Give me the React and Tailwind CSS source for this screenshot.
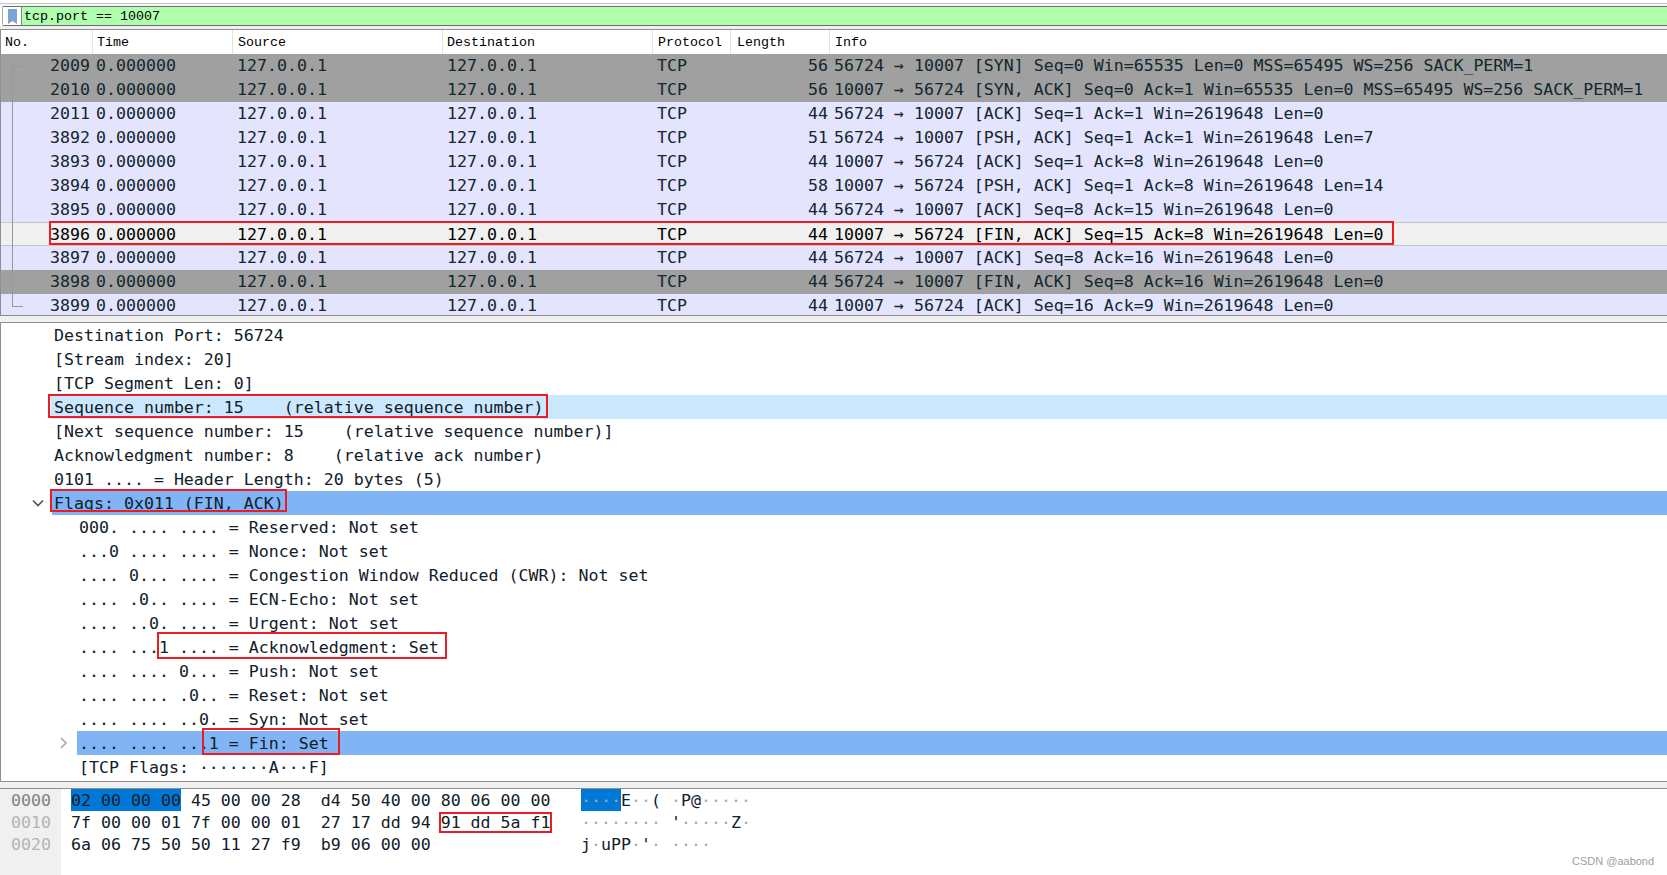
import React from "react";

const cols = "grid grid-cols-[92px_140px_210px_210px_78px_99px_1fr]";
const G = "bg-[#a0a0a0]";
const P = "bg-[#e4e4ff]";
const S = "bg-[#f0f0f0] text-black border-y border-[#c4c4c4] pt-[2px]";

const packets = [
  ["2009", "56", "56724 → 10007 [SYN] Seq=0 Win=65535 Len=0 MSS=65495 WS=256 SACK_PERM=1", G],
  ["2010", "56", "10007 → 56724 [SYN, ACK] Seq=0 Ack=1 Win=65535 Len=0 MSS=65495 WS=256 SACK_PERM=1", G],
  ["2011", "44", "56724 → 10007 [ACK] Seq=1 Ack=1 Win=2619648 Len=0", P],
  ["3892", "51", "56724 → 10007 [PSH, ACK] Seq=1 Ack=1 Win=2619648 Len=7", P],
  ["3893", "44", "10007 → 56724 [ACK] Seq=1 Ack=8 Win=2619648 Len=0", P],
  ["3894", "58", "10007 → 56724 [PSH, ACK] Seq=1 Ack=8 Win=2619648 Len=14", P],
  ["3895", "44", "56724 → 10007 [ACK] Seq=8 Ack=15 Win=2619648 Len=0", P],
  ["3896", "44", "10007 → 56724 [FIN, ACK] Seq=15 Ack=8 Win=2619648 Len=0", S],
  ["3897", "44", "56724 → 10007 [ACK] Seq=8 Ack=16 Win=2619648 Len=0", P],
  ["3898", "44", "56724 → 10007 [FIN, ACK] Seq=8 Ack=16 Win=2619648 Len=0", G],
  ["3899", "44", "10007 → 56724 [ACK] Seq=16 Ack=9 Win=2619648 Len=0", P],
];

const details = [
  [0, "Destination Port: 56724", ""],
  [0, "[Stream index: 20]", ""],
  [0, "[TCP Segment Len: 0]", ""],
  [0, "Sequence number: 15    (relative sequence number)", "seq"],
  [0, "[Next sequence number: 15    (relative sequence number)]", ""],
  [0, "Acknowledgment number: 8    (relative ack number)", ""],
  [0, "0101 .... = Header Length: 20 bytes (5)", ""],
  [0, "Flags: 0x011 (FIN, ACK)", "flags"],
  [1, "000. .... .... = Reserved: Not set", ""],
  [1, "...0 .... .... = Nonce: Not set", ""],
  [1, ".... 0... .... = Congestion Window Reduced (CWR): Not set", ""],
  [1, ".... .0.. .... = ECN-Echo: Not set", ""],
  [1, ".... ..0. .... = Urgent: Not set", ""],
  [1, ".... ...1 .... = Acknowledgment: Set", ""],
  [1, ".... .... 0... = Push: Not set", ""],
  [1, ".... .... .0.. = Reset: Not set", ""],
  [1, ".... .... ..0. = Syn: Not set", ""],
  [1, ".... .... ...1 = Fin: Set", "fin"],
  [1, "[TCP Flags: ·······A···F]", ""],
];

function Dots({ text }) {
  return (
    <>
      {text.split("").map((c, i) =>
        c === "·" ? (
          <span key={i} className="text-[#a8a8a8]">·</span>
        ) : (
          <span key={i}>{c}</span>
        )
      )}
    </>
  );
}

function HeadCell({ children, last, pad }) {
  return (
    <div className={`flex items-center pt-[2px] ${pad} ${last ? "" : "border-r border-[#e4e4e4]"}`}>
      {children}
    </div>
  );
}

function Packet({ p }) {
  return (
    <div className={`${cols} h-6 items-center overflow-hidden ${p[3]}`}>
      <div className="text-right pr-[3px]">{p[0]}</div>
      <div className="pl-[3px]">0.000000</div>
      <div className="pl-[4px]">127.0.0.1</div>
      <div className="pl-[4px]">127.0.0.1</div>
      <div className="pl-[4px]">TCP</div>
      <div className="text-right pr-[2px]">{p[1]}</div>
      <div className="pl-[4px]">{p[2]}</div>
    </div>
  );
}

function DetailRow({ d }) {
  const kind = d[2];
  return (
    <div className="h-6 flex items-center relative">
      {kind === "seq" && <div className="absolute left-[50px] right-0 inset-y-0 bg-[#cce8ff]" />}
      {kind === "flags" && (
        <>
          <div className="absolute left-[51px] right-0 inset-y-0 bg-[#80b4f5]" />
          <svg className="absolute left-[31px] top-[7px]" width="12" height="10" viewBox="0 0 12 10" fill="none">
            <path d="M1 2.5 L6 7.5 L11 2.5" stroke="#505050" strokeWidth="1.6" />
          </svg>
        </>
      )}
      {kind === "fin" && (
        <>
          <div className="absolute left-[76px] right-0 inset-y-0 bg-[#80b4f5]" />
          <svg className="absolute left-[58px] top-[6px]" width="9" height="12" viewBox="0 0 9 12" fill="none">
            <path d="M2 1 L7 6 L2 11" stroke="#a8a8a8" strokeWidth="1.6" />
          </svg>
        </>
      )}
      <div className={`relative pt-[2px] ${d[0] ? "pl-[78px]" : "pl-[53px]"}`}>{d[1]}</div>
    </div>
  );
}

export default function App() {
  return (
    <div className="relative w-full h-[875px] overflow-hidden bg-white flex flex-col font-['DejaVu_Sans_Mono',monospace] text-[16.6px] leading-none tracking-normal whitespace-pre text-[#12272e]">
      {/* top strip */}
      <div className="h-[6px] bg-[#f5f5f5] border-t-[3px] border-white shrink-0">
        <div className="h-px bg-[#c8c8c8]" />
      </div>

      {/* filter bar */}
      <div className="h-[20px] shrink-0 flex items-stretch bg-[#afffaf] border-y border-[#6e6e6e] border-l border-l-[#a8a8a8] rounded-l-[2px] ml-[2px] font-['Liberation_Mono',monospace] text-[13.33px] text-black">
        <div className="w-[19px] bg-white border-r border-[#8a8a8a] flex items-center justify-center">
          <svg width="9" height="15" viewBox="0 0 9 15">
            <path d="M0 0 H9 V15 L4.5 12 L0 15 Z" fill="#7ba4d6" />
          </svg>
        </div>
        <div className="pl-[2px] pt-[2px] flex items-center">tcp.port == 10007</div>
      </div>

      <div className="h-[3px] shrink-0 bg-[#f0f0f0]" />

      {/* packet list */}
      <div className="h-[287px] shrink-0 border-t border-[#8a8a8a] border-b border-l border-[#8f8f8f] overflow-hidden">
        <div className={`${cols} h-[24px] bg-white font-['Liberation_Mono',monospace] text-[13.33px] text-black`}>
          <HeadCell pad="pl-[4px]">No.</HeadCell>
          <HeadCell pad="pl-[4px]">Time</HeadCell>
          <HeadCell pad="pl-[5px]">Source</HeadCell>
          <HeadCell pad="pl-[4px]">Destination</HeadCell>
          <HeadCell pad="pl-[5px]">Protocol</HeadCell>
          <HeadCell pad="pl-[6px]">Length</HeadCell>
          <HeadCell pad="pl-[5px]" last>Info</HeadCell>
        </div>
        {packets.map((p) => (
          <Packet key={p[0]} p={p} />
        ))}
      </div>

      <div className="h-[6px] shrink-0 bg-[#f0f0f0]" />

      {/* packet details */}
      <div className="h-[460px] shrink-0 border-y border-l border-[#8f8f8f] text-[#10202a] overflow-hidden">
        {details.map((d, i) => (
          <DetailRow key={i} d={d} />
        ))}
      </div>

      <div className="h-[6px] shrink-0 bg-[#f0f0f0]" />

      {/* hex dump */}
      <div className="flex-1 flex border-t border-[#8f8f8f]">
        <div className="w-[61px] bg-[#f0f0f0] pl-[11px]">
          <div className="h-[22px] pt-[2px] flex items-center text-[#808080]">0000</div>
          <div className="h-[22px] pt-[2px] flex items-center text-[#b4b4b4]">0010</div>
          <div className="h-[22px] pt-[2px] flex items-center text-[#b4b4b4]">0020</div>
        </div>
        <div className="pl-[10px] w-[520px] shrink-0 text-[#10202a]">
          <div className="h-[22px] flex items-center">
            <span className="bg-[#0078d7] h-full pt-[2px] flex items-center">02 00 00 00</span>
            <span className="pt-[2px]"> 45 00 00 28  d4 50 40 00 80 06 00 00</span>
          </div>
          <div className="h-[22px] pt-[2px] flex items-center">7f 00 00 01 7f 00 00 01  27 17 dd 94 91 dd 5a f1</div>
          <div className="h-[22px] pt-[2px] flex items-center">6a 06 75 50 50 11 27 f9  b9 06 00 00</div>
        </div>
        <div className="text-[#10202a]">
          <div className="h-[22px] flex items-center">
            <span className="bg-[#0078d7] h-full pt-[2px] flex items-center"><Dots text="····" /></span>
            <span className="pt-[2px]"><Dots text="E··( ·P@·····" /></span>
          </div>
          <div className="h-[22px] pt-[2px] flex items-center"><span><Dots text="········ '·····Z·" /></span></div>
          <div className="h-[22px] pt-[2px] flex items-center"><span><Dots text="j·uPP·'· ····" /></span></div>
        </div>
      </div>

      {/* conversation tree markers */}
      <div className="absolute left-[12px] top-[66px] h-[241px] w-[11px] border-l border-y border-[#8a9ba8]" />

      {/* red annotation boxes */}
      <div className="absolute left-[49px] top-[221px] w-[1345px] h-[24px] border-2 border-[#ed1c24]" />
      <div className="absolute left-[48px] top-[394px] w-[500px] h-[24px] border-2 border-[#ed1c24]" />
      <div className="absolute left-[50px] top-[489px] w-[237px] h-[23px] border-2 border-[#ed1c24]" />
      <div className="absolute left-[157px] top-[632px] w-[290px] h-[27px] border-2 border-[#ed1c24]" />
      <div className="absolute left-[202px] top-[728px] w-[138px] h-[27px] border-2 border-[#ed1c24]" />
      <div className="absolute left-[439px] top-[812px] w-[113px] h-[21px] border-2 border-[#ed1c24]" />

      {/* watermark */}
      <div className="absolute left-[1572px] top-[854px] font-['Liberation_Sans',sans-serif] text-[11px] leading-[14px] text-[#a0a0a0]">CSDN @aabond</div>
    </div>
  );
}
